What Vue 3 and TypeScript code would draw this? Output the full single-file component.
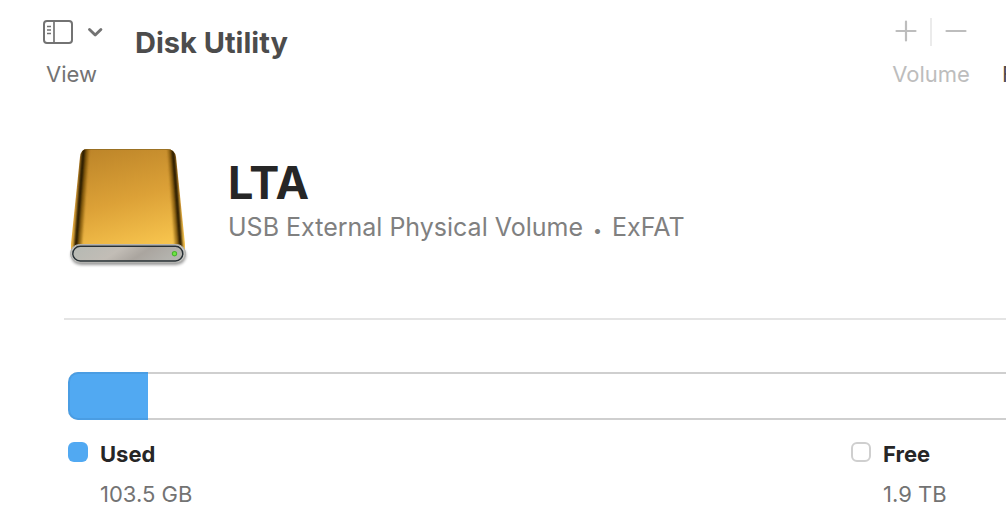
<script setup lang="ts">
interface Segment {
  name: string
  size: string
  kind: 'used' | 'free'
}

const volume = {
  name: 'LTA',
  type: 'USB External Physical Volume',
  format: 'ExFAT',
}

const segments: Segment[] = [
  { name: 'Used', size: '103.5 GB', kind: 'used' },
  { name: 'Free', size: '1.9 TB', kind: 'free' },
]

const usedPercent = 8.5
</script>

<template>
  <div class="window">
    <header class="toolbar">
      <button type="button" class="tool view">
        <span class="tool-icons">
          <svg width="60" height="26" viewBox="0 0 60 26" fill="none" stroke="#737373" aria-hidden="true">
            <rect x="1" y="2" width="28" height="22" rx="3" stroke-width="2" />
            <path d="M11 2v22" stroke-width="1.7" />
            <path d="M4 7.500h4M4 11h4M4 14.500h4" stroke-width="1.500" />
            <path d="M46.500 10.500l5.700 5.500 5.700-5.500" stroke-width="2.900" stroke-linecap="round" stroke-linejoin="round" />
          </svg>
        </span>
        <span class="tool-label">View</span>
      </button>
      <h1 class="title">Disk Utility</h1>
      <div class="actions">
        <div class="tool volume" role="group" aria-labelledby="volume-label">
          <div class="tool-icons">
            <button type="button" class="glyph" disabled aria-label="Add volume">
              <svg width="22" height="22" viewBox="0 0 22 22" stroke="#bdbdbd" stroke-width="2.200" stroke-linecap="round">
                <path d="M11 1.500v19M1.500 11h19" />
              </svg>
            </button>
            <span class="divider"></span>
            <button type="button" class="glyph" disabled aria-label="Remove volume">
              <svg width="22" height="22" viewBox="0 0 22 22" stroke="#bdbdbd" stroke-width="2.200" stroke-linecap="round">
                <path d="M1.500 11h19" />
              </svg>
            </button>
          </div>
          <span id="volume-label" class="tool-label">Volume</span>
        </div>
        <button type="button" class="tool clipped">
          <span class="tool-icons"></span>
          <span class="tool-label">First Aid</span>
        </button>
      </div>
    </header>

    <main class="content">
      <section class="summary">
        <svg class="drive" width="124" height="124" viewBox="0 0 124 124" aria-hidden="true">
          <defs>
            <linearGradient id="gold" x1="0.300" y1="0" x2="0.600" y2="1">
              <stop offset="0" stop-color="#bd8529" />
              <stop offset="0.500" stop-color="#dca137" />
              <stop offset="1" stop-color="#fac850" />
            </linearGradient>
            <linearGradient id="front" x1="0" x2="1" y1="0" y2="0.200">
              <stop offset="0" stop-color="#b5b9b3" />
              <stop offset="0.450" stop-color="#c2bdb6" />
              <stop offset="0.700" stop-color="#aaa59f" />
              <stop offset="1" stop-color="#b4b3ae" />
            </linearGradient>
            <clipPath id="body">
              <path d="M21 3H101Q108.500 3 110 11L119 98V107H5V98L14 11Q15 3 21 3Z" />
            </clipPath>
            <filter id="shadow" x="-10%" y="-50%" width="120%" height="220%">
              <feGaussianBlur stdDeviation="1.500" />
            </filter>
            <filter id="soft" x="-50%" y="-10%" width="200%" height="120%">
              <feGaussianBlur stdDeviation="1.100" />
            </filter>
          </defs>
          <rect x="5" y="100" width="115" height="19" rx="10" fill="#000" opacity="0.400" filter="url(#shadow)" />
          <g clip-path="url(#body)">
            <rect width="124" height="110" fill="url(#gold)" />
            <g filter="url(#soft)" fill="none">
              <path d="M19.500 -2L11.500 106" stroke="#6f4909" stroke-width="7" opacity="0.650" />
              <path d="M104.500 -2L112.500 106" stroke="#6f4909" stroke-width="6" opacity="0.600" />
              <path d="M18 -2L9.500 106" stroke="#2a1a00" stroke-width="4" />
              <path d="M106.500 -2L115 106" stroke="#2a1a00" stroke-width="4" />
            </g>
            <path d="M16 3.500H107" stroke="#80611f" opacity="0.600" />
          </g>
          <rect x="4.500" y="98.500" width="115" height="18" rx="9" fill="#c5c5c2" stroke="#b2b2af" />
          <rect x="6.800" y="100.300" width="110" height="14.700" rx="7.350" fill="url(#front)" stroke="#273035" stroke-width="1.400" />
          <circle cx="108.500" cy="107.700" r="2.700" fill="#49b52c" />
          <circle cx="108.500" cy="107.700" r="1.600" fill="#70e645" />
        </svg>
        <div>
          <h2 class="name">{{ volume.name }}</h2>
          <p class="description">{{ volume.type }} <span class="bullet">•</span> {{ volume.format }}</p>
        </div>
      </section>

      <section class="usage">
        <div class="bar" role="img" aria-label="103.5 GB used, 1.9 TB free">
          <div class="bar-used" :style="{ width: usedPercent + '%' }"></div>
        </div>
        <dl class="legend">
          <div v-for="segment in segments" :key="segment.name" class="entry">
            <span class="swatch" :class="segment.kind"></span>
            <dt>{{ segment.name }}</dt>
            <dd>{{ segment.size }}</dd>
          </div>
        </dl>
      </section>
    </main>
  </div>
</template>

<style>
body {
  margin: 0;
  background: #fff;
}
</style>

<style scoped>
.window {
  font-family: Inter, "Liberation Sans", sans-serif;
  color: #262626;
  overflow: hidden;
}

h1,
h2,
p,
dl,
dt,
dd {
  margin: 0;
}

button {
  padding: 0;
  border: 0;
  background: none;
  font: inherit;
}

.toolbar {
  display: flex;
  align-items: flex-start;
  height: 100px;
  padding: 19px 0 0 43px;
  box-sizing: border-box;
}

.tool {
  display: flex;
  flex-direction: column;
  gap: 15px;
}

.tool-icons {
  display: flex;
  align-items: center;
  height: 26px;
}

.tool-label {
  font-size: 22px;
  line-height: 28px;
  white-space: nowrap;
}

.view {
  color: #737373;
  text-align: left;
}

.view .tool-label {
  padding-left: 3px;
}

.title {
  margin-left: 32px;
  padding-top: 6px;
  font-size: 29px;
  line-height: 36px;
  font-weight: 700;
  color: #4c4c4c;
}

.actions {
  display: flex;
  margin-left: auto;
}

.volume {
  width: 78px;
  margin-right: 32px;
  align-items: center;
  color: #bdbdbd;
}

.volume .tool-icons {
  gap: 13px;
}

.glyph {
  display: flex;
  padding-bottom: 2px;
}

.divider {
  width: 2px;
  height: 28px;
  background: #ebebeb;
}

.clipped {
  width: 4px;
  overflow: hidden;
  color: #4c4c4c;
}

.content {
  padding-left: 64px;
}

.summary {
  display: flex;
  align-items: flex-start;
  gap: 38px;
  padding: 46px 0 48px 2px;
  border-bottom: 2px solid #e4e4e4;
}

.drive {
  flex: none;
}

.name {
  padding-top: 9px;
  font-size: 45px;
  line-height: 56px;
  font-weight: 700;
}

.description {
  font-size: 25px;
  line-height: 32px;
  color: #808080;
  white-space: nowrap;
}

.bullet {
  margin: 0 3px;
  font-size: 16px;
}

.usage {
  padding: 52px 0 0 4px;
}

.bar {
  height: 48px;
  box-sizing: border-box;
  border: 2px solid #cfcfcf;
  border-width: 2px 0;
  border-radius: 10px 0 0 10px;
}

.bar-used {
  height: 48px;
  margin-top: -2px;
  box-sizing: border-box;
  border: 2px solid #4a9de3;
  border-right: 0;
  border-radius: 10px 0 0 10px;
  background: #51a9f2;
}

.legend {
  display: grid;
  grid-template-columns: 1fr 155px;
  padding-top: 20px;
}

.entry {
  display: grid;
  grid-template-columns: 20px 1fr;
  column-gap: 12px;
  row-gap: 12px;
  font-size: 22px;
  line-height: 28px;
}

.swatch {
  width: 20px;
  height: 20px;
  margin-top: 2px;
  box-sizing: border-box;
  border-radius: 6px;
}

.used {
  background: #51a9f2;
}

.free {
  border: 2px solid #cfcfcf;
}

dt {
  font-weight: 700;
}

dd {
  grid-column: 2;
  color: #737373;
}
</style>
